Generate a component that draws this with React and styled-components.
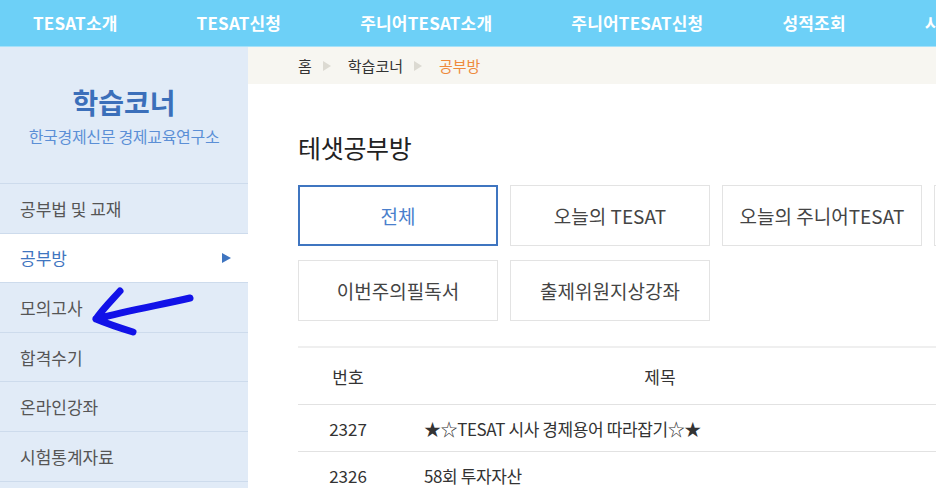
import React from "react";
import styled, { createGlobalStyle } from "styled-components";

const GlobalStyle = createGlobalStyle`
  html, body {
    margin: 0;
    padding: 0;
    overflow: hidden;
    background: #fff;
  }
  body {
    font-family: "Noto Sans CJK KR", "Noto Sans", sans-serif;
    color: #333;
  }
`;

const navItems = ["TESAT소개", "TESAT신청", "주니어TESAT소개", "주니어TESAT신청", "성적조회", "시험안내"];
const menu = ["공부법 및 교재", "공부방", "모의고사", "합격수기", "온라인강좌", "시험통계자료"];
const tabs = ["전체", "오늘의 TESAT", "오늘의 주니어TESAT", "경제신문 읽기", "이번주의필독서", "출제위원지상강좌"];
const rows = [
  { no: 2327, title: "★☆TESAT 시사 경제용어 따라잡기☆★" },
  { no: 2326, title: "58회 투자자산" }
];

export default function App() {
  return (
    <Page>
      <GlobalStyle />
      <TopNav>
        {navItems.map(n => (
          <NavItem key={n}>{n}</NavItem>
        ))}
      </TopNav>
      <Body>
        <Sidebar>
          <SideHead>
            <SideTitle>학습코너</SideTitle>
            <SideSub>한국경제신문 경제교육연구소</SideSub>
          </SideHead>
          <SideMenu>
            {menu.map(m => (
              <SideItem key={m} active={m === "공부방"}>
                {m}
                {m === "공부방" && <Caret />}
              </SideItem>
            ))}
          </SideMenu>
          <Scribble viewBox="0 0 120 60" aria-hidden="true">
            <path
              d="M110 18 C 80 25, 50 30, 16 39 M40 11 C 31 21, 22 30, 16 39 C 28 44, 40 48, 53 52"
              fill="none"
              stroke="#1212e8"
              strokeWidth="7"
              strokeLinecap="round"
              strokeLinejoin="round"
            />
          </Scribble>
        </Sidebar>
        <Main>
          <Breadcrumb>
            <Crumb>홈</Crumb>
            <Sep />
            <Crumb>학습코너</Crumb>
            <Sep />
            <Crumb current>공부방</Crumb>
          </Breadcrumb>
          <Content>
            <PageTitle>테샛공부방</PageTitle>
            <TabGrid>
              {tabs.map(t => (
                <Tab key={t} selected={t === "전체"}>
                  {t}
                </Tab>
              ))}
            </TabGrid>
            <Table>
              <HeadRow>
                <NoCell>번호</NoCell>
                <TitleHead>제목</TitleHead>
              </HeadRow>
              {rows.map(r => (
                <Row key={r.no}>
                  <NoCell>{r.no}</NoCell>
                  <TitleCell>{r.title}</TitleCell>
                </Row>
              ))}
            </Table>
          </Content>
        </Main>
      </Body>
    </Page>
  );
}

const Page = styled.div`
  width: 936px;
  height: 488px;
  overflow: hidden;
`;

const TopNav = styled.nav`
  height: 46px;
  background: #6dd0f7;
  border-bottom: 1px solid #a6e1f9;
  display: flex;
  align-items: center;
  gap: 79px;
  padding-left: 33px;
  white-space: nowrap;
  overflow: hidden;
`;

const NavItem = styled.a`
  color: #fff;
  font-size: 17px;
  font-weight: 700;
  letter-spacing: 0.2px;
  line-height: 46px;
`;

const Body = styled.div`
  display: flex;
  height: 441px;
`;

const Sidebar = styled.aside`
  position: relative;
  width: 248px;
  flex-shrink: 0;
  background: #e1ebf7;
`;

const SideHead = styled.div`
  height: 136px;
  display: flex;
  flex-direction: column;
  align-items: center;
  padding-top: 36px;
  box-sizing: border-box;
`;

const SideTitle = styled.h2`
  margin: 0;
  font-size: 28px;
  line-height: 38px;
  font-weight: 700;
  color: #3b6fba;
`;

const SideSub = styled.div`
  margin-top: 5px;
  font-size: 16px;
  line-height: 20px;
  color: #5b8fd6;
  letter-spacing: -0.3px;
`;

const SideMenu = styled.ul`
  list-style: none;
  margin: 0;
  padding: 0;
  border-top: 1px solid #cddbec;
`;

const SideItem = styled.li`
  height: 48.6px;
  display: flex;
  align-items: center;
  justify-content: space-between;
  padding: 0 17px 0 20px;
  border-bottom: 1px solid #cddbec;
  font-size: 17px;
  color: ${p => (p.active ? "#3f75c0" : "#555")};
  background: ${p => (p.active ? "#fff" : "transparent")};
`;

const Caret = styled.span`
  width: 0;
  height: 0;
  border-top: 5px solid transparent;
  border-bottom: 5px solid transparent;
  border-left: 9px solid #3f75c0;
`;

const Scribble = styled.svg`
  position: absolute;
  left: 80px;
  top: 233px;
  width: 120px;
  height: 60px;
`;

const Main = styled.main`
  flex: 1;
  min-width: 0;
`;

const Breadcrumb = styled.div`
  height: 37px;
  background: #f7f6f1;
  display: flex;
  align-items: center;
  padding-left: 50px;
  font-size: 15px;
`;

const Crumb = styled.span`
  color: ${p => (p.current ? "#ee8a3c" : "#333")};
`;

const Sep = styled.span`
  width: 0;
  height: 0;
  margin: 0 17px 0 11px;
  border-top: 5px solid transparent;
  border-bottom: 5px solid transparent;
  border-left: 8px solid #dcdad2;
`;

const Content = styled.div`
  padding: 47px 0 0 50px;
`;

const PageTitle = styled.h1`
  margin: 0 0 22px;
  font-size: 25px;
  line-height: 32px;
  font-weight: 400;
  color: #222;
  letter-spacing: -0.3px;
`;

const TabGrid = styled.div`
  display: grid;
  grid-template-columns: repeat(4, 200px);
  grid-auto-rows: 61px;
  gap: 14px 12px;
  width: 900px;
`;

const Tab = styled.div`
  display: flex;
  align-items: center;
  justify-content: center;
  box-sizing: border-box;
  font-size: 19px;
  background: #fff;
  border: ${p => (p.selected ? "2px solid #3f75c0" : "1px solid #e3e3e3")};
  color: ${p => (p.selected ? "#4a7fcc" : "#444")};
`;

const Table = styled.div`
  margin-top: 25px;
  width: 900px;
  border-top: 2px solid #efefef;
`;

const HeadRow = styled.div`
  display: flex;
  height: 56px;
  align-items: center;
  border-bottom: 1px solid #e2e2e2;
  font-size: 17px;
  color: #333;
`;

const Row = styled.div`
  display: flex;
  height: 46px;
  align-items: center;
  border-bottom: 1px solid #e2e2e2;
  font-size: 17px;
  color: #333;
`;

const NoCell = styled.div`
  width: 100px;
  text-align: center;
`;

const TitleHead = styled.div`
  width: 524px;
  text-align: center;
`;

const TitleCell = styled.div`
  padding-left: 26px;
  letter-spacing: -0.4px;
`;
